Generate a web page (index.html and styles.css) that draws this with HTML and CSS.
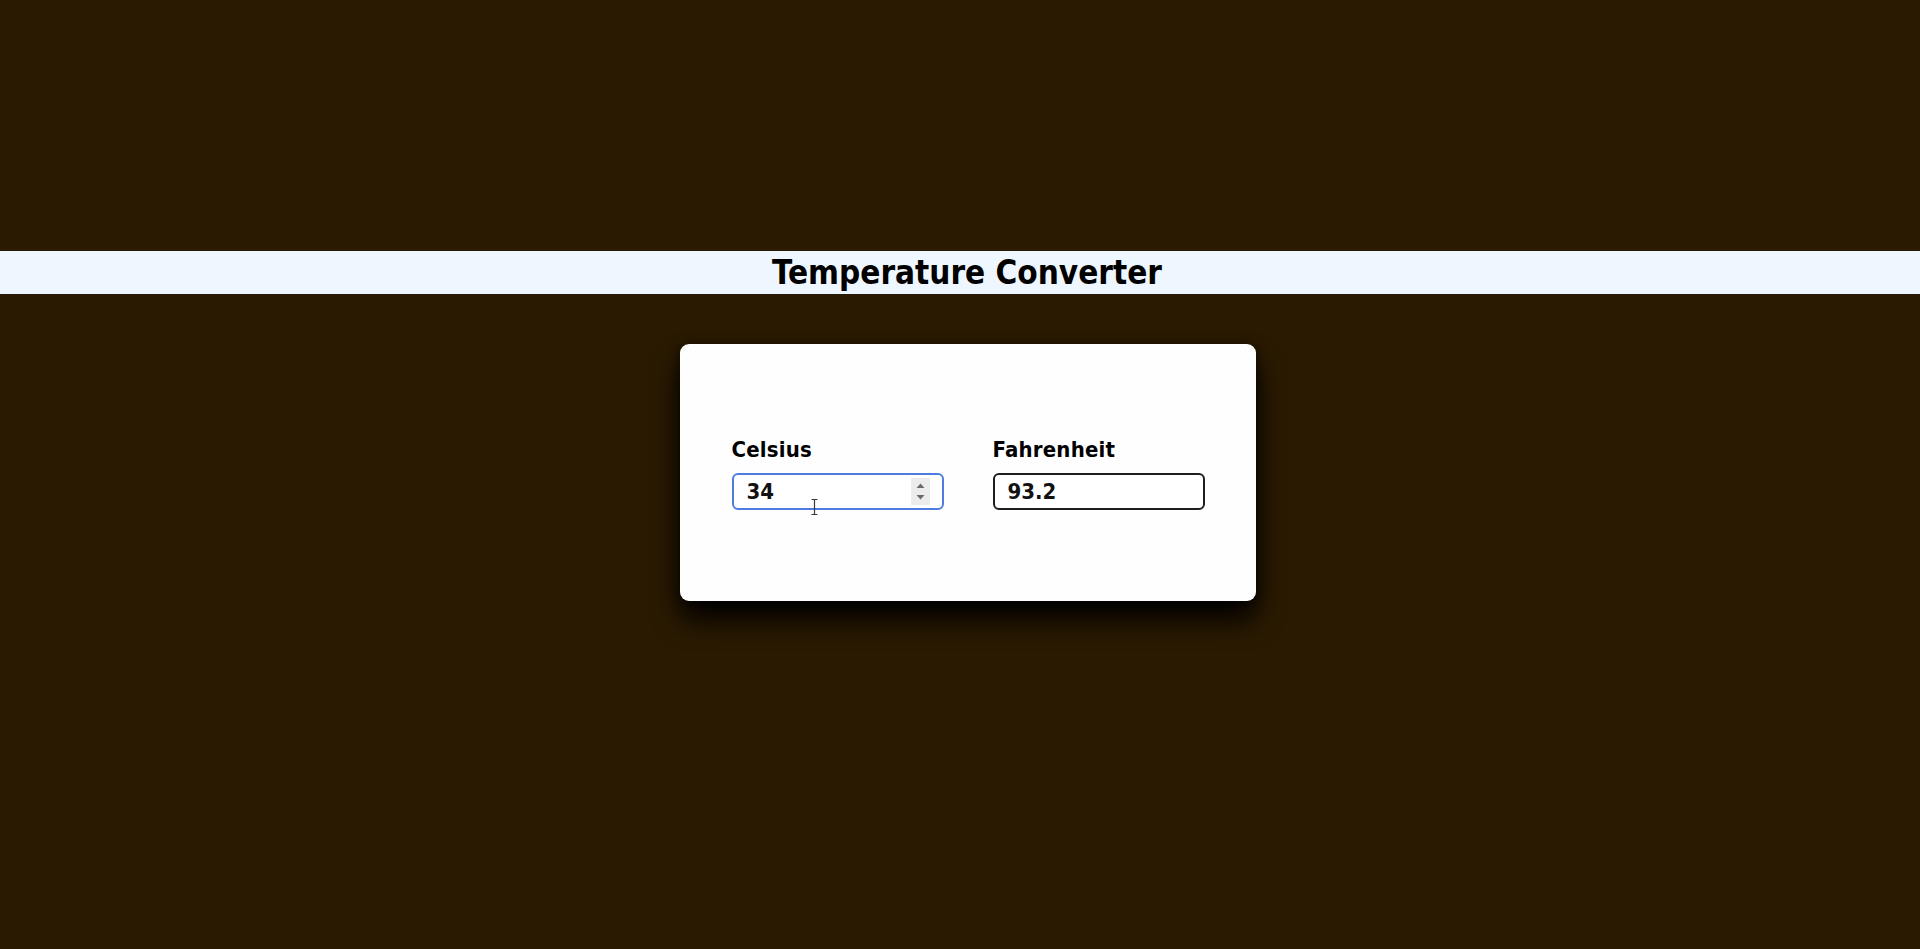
FILE: index.html
```html
<!DOCTYPE html>
<html lang="en">
<head>
<meta charset="utf-8">
<title>Temperature Converter</title>
<link rel="stylesheet" href="styles.css">
</head>
<body>
<header class="banner">
  <h1 class="title">Temperature Converter</h1>
</header>
<main class="stage">
  <section class="card">
    <div class="field">
      <label class="label" for="celsius">Celsius</label>
      <div class="box box-focus">
        <input class="value" id="celsius" type="text" value="34">
        <span class="spinner" aria-hidden="true">
          <svg width="19" height="27" viewBox="0 0 19 27">
            <path d="M5.5 10 L9.5 5.5 L13.5 10 Z" fill="#6b6b6b"/>
            <path d="M5.5 17 L9.5 21.5 L13.5 17 Z" fill="#6b6b6b"/>
          </svg>
        </span>
      </div>
      <svg class="ibeam" width="9" height="16" viewBox="0 0 9 16" aria-hidden="true">
        <path d="M1.5 0.5 H7.5 M4.5 0.5 V15.5 M1.5 15.5 H7.5" stroke="#3a3a3a" stroke-width="1.2" fill="none"/>
      </svg>
    </div>
    <div class="field">
      <label class="label" for="fahrenheit">Fahrenheit</label>
      <div class="box">
        <input class="value" id="fahrenheit" type="text" value="93.2">
      </div>
    </div>
  </section>
</main>
</body>
</html>
```
FILE: styles.css
```css
html, body {
  margin: 0;
  padding: 0;
}

body {
  background: #2a1a02;
  font-family: "DejaVu Sans Condensed", "DejaVu Sans", "Liberation Sans", sans-serif;
  font-stretch: condensed;
  color: #000;
  min-height: 949px;
}

.banner {
  margin-top: 251px;
  height: 43px;
  background: #eef7ff;
}

.title {
  margin: 0;
  padding-left: 14px;
  font-size: 33px;
  line-height: 43px;
  font-weight: 700;
  text-align: center;
  color: #000;
}

.stage {
  display: flex;
  justify-content: center;
  padding-left: 16px;
}

.card {
  margin-top: 50px;
  width: 576px;
  height: 257px;
  box-sizing: border-box;
  padding-top: 3px;
  background: #fefefe;
  border-radius: 9px;
  box-shadow: 0 18px 28px rgba(0, 0, 0, 1), 0 2px 12px rgba(0, 0, 0, 0.55);
  display: flex;
  justify-content: center;
  align-items: center;
  gap: 49px;
}

.field {
  position: relative;
  display: flex;
  flex-direction: column;
  gap: 12px;
  width: 212px;
}

.label {
  font-size: 22px;
  line-height: 23px;
  font-weight: 700;
  letter-spacing: 0.2px;
}

.box {
  width: 212px;
  height: 37px;
  box-sizing: border-box;
  border: 2px solid #1e1e1e;
  border-radius: 6px;
  display: flex;
  align-items: center;
  padding: 0 12px 0 13px;
  background: #fff;
}

.box-focus {
  border-color: #4f7ddf;
}

.value {
  flex: 1;
  min-width: 0;
  border: 0;
  outline: 0;
  padding: 0;
  margin: 0;
  background: transparent;
  font-family: "DejaVu Sans Condensed", "DejaVu Sans", "Liberation Sans", sans-serif;
  font-stretch: condensed;
  font-size: 22px;
  font-weight: 700;
  color: #111;
}

.spinner {
  width: 19px;
  height: 27px;
  background: #ececec;
  display: flex;
}

.ibeam {
  position: absolute;
  left: 78px;
  top: 61px;
}
```
